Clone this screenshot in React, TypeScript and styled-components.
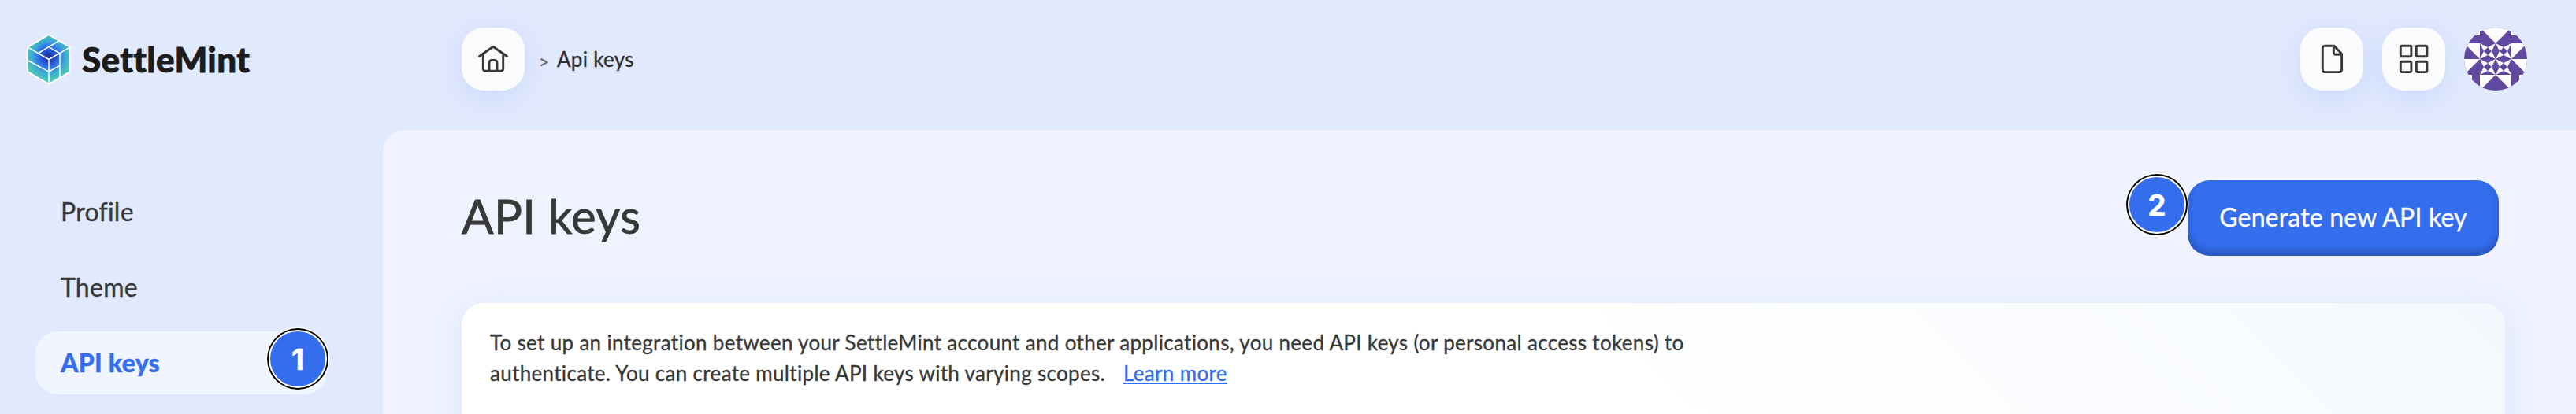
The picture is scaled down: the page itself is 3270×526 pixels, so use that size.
import React from "react";
import styled, { createGlobalStyle } from "styled-components";

const color = {
  shell: "#e1e9fd",
  main: "#f0f3ff",
  surface: "#fbfbfe",
  ink: "#373838",
  blue: "#346eed",
  active: "#f0f5ff",
  avatar: "#6149a0",
};

const GlobalStyle = createGlobalStyle`
  *, *::before, *::after { box-sizing: border-box; }
  body {
    margin: 0;
    overflow: hidden;
    background: ${color.shell};
    color: ${color.ink};
    font-family: Lato, "Open Sans", sans-serif;
    font-variant-ligatures: none;
    -webkit-text-stroke: 0.35px currentColor;
  }
`;

const Shell = styled.div`
  display: grid;
  grid-template-columns: 486px 1fr;
  grid-template-rows: 165px 361px;
  width: 100%;
  height: 526px;
  overflow: hidden;
`;

const Brand = styled.div`
  display: flex;
  align-items: center;
  gap: 14px;
  height: 150px;
  padding-left: 34px;
`;

const Wordmark = styled.span`
  color: #1c1c1c;
  font-size: 44px;
  font-weight: 900;
  line-height: 52px;
  letter-spacing: 0.4px;
  -webkit-text-stroke: 0.8px #1c1c1c;
`;

const TopBar = styled.header`
  display: flex;
  align-items: center;
  justify-content: space-between;
  height: 150px;
  padding: 0 62px 0 100px;
`;

const Breadcrumb = styled.nav`
  display: flex;
  align-items: center;
  font-size: 26px;
`;

const Separator = styled.span`
  width: 13px;
  margin: 6px 10px 0 18px;
  color: #66686f;
  font-size: 23px;
  line-height: 24px;
`;

const Crumb = styled.span`
  color: #2c2e33;
  letter-spacing: 0.3px;
`;

const Actions = styled.div`
  display: flex;
  gap: 24px;
`;

const IconButton = styled.button`
  display: block;
  width: 80px;
  height: 80px;
  padding: 0;
  border: 0;
  border-radius: 28px;
  background: ${color.surface};
  box-shadow: 0 8px 32px rgba(176, 198, 255, 0.45);
`;

const Glyph = styled.svg`
  display: block;
  width: 80px;
  height: 80px;
  fill: none;
  stroke: ${color.ink};
  stroke-width: 2.9;
  stroke-linecap: round;
  stroke-linejoin: round;
`;

const Avatar = styled.svg`
  display: block;
  width: 80px;
  height: 80px;
  border-radius: 50%;
`;

const Sidebar = styled.aside`
  display: flex;
  flex-direction: column;
  gap: 16px;
  padding: 64px 71px 0 45px;
`;

const NavItem = styled.a<{ $active?: boolean }>`
  position: relative;
  display: flex;
  flex-shrink: 0;
  align-items: center;
  height: 80px;
  padding: 0 32px 2px;
  border-radius: 28px;
  background: ${(p) => (p.$active ? color.active : "transparent")};
  color: ${(p) => (p.$active ? color.blue : color.ink)};
  font-size: 32px;
  font-weight: ${(p) => (p.$active ? 900 : 400)};
  letter-spacing: 0.25px;
`;

const Marker = styled.span<{ $left: number; $top: number }>`
  position: absolute;
  left: ${(p) => p.$left}px;
  top: ${(p) => p.$top}px;
  display: flex;
  align-items: center;
  justify-content: center;
  width: 74px;
  height: 74px;
  padding-top: 1px;
  border: 2px solid #fff;
  border-radius: 50%;
  background: ${color.blue};
  box-shadow: 0 0 0 2px #000, 0 0 0 3.5px #fff;
  color: #fff;
  font: 700 37px/44px Inter, sans-serif;
  letter-spacing: 0;
`;

const Main = styled.main`
  padding: 64px 90px 0 100px;
  border-top-left-radius: 28px;
  background: ${color.main};
`;

const PageHead = styled.div`
  display: flex;
  align-items: center;
  justify-content: space-between;
  height: 96px;
  padding-right: 8px;
`;

const Title = styled.h1`
  margin: 0;
  padding-bottom: 6px;
  font-size: 60px;
  font-weight: 400;
  line-height: 72px;
  letter-spacing: 0.3px;
  -webkit-text-stroke-width: 0.8px;
`;

const PrimaryButton = styled.button`
  position: relative;
  width: 395px;
  height: 96px;
  padding: 0 0 2px;
  border: 0;
  border-radius: 28px;
  background: ${color.blue};
  box-shadow: inset 0 -6px 8px rgba(20, 40, 110, 0.4);
  color: #fff;
  font: 400 32px/40px Lato, sans-serif;
  letter-spacing: 0.18px;
  -webkit-text-stroke: 0.35px #fff;
`;

const Card = styled.section`
  height: 400px;
  margin-top: 60px;
  padding: 31px 36px;
  border-radius: 28px;
  background: linear-gradient(45deg, #fff 60%, #f4f8fe 100%);
  box-shadow: 0 8px 40px rgba(205, 222, 252, 0.75);
`;

const Intro = styled.div`
  font-size: 26px;
  line-height: 39px;
  letter-spacing: 0.32px;
  white-space: nowrap;
`;

const IntroLine = styled.div`
  display: flex;
  gap: 23px;
`;

const TextLink = styled.a`
  color: ${color.blue};
  text-decoration: underline;
  text-decoration-thickness: 2px;
  text-underline-offset: 2px;
  text-decoration-skip-ink: none;
`;

const LogoMark = () => (
  <svg width="56" height="65" viewBox="42 37 168 194">
    <defs>
      <radialGradient id="mint" gradientUnits="userSpaceOnUse" cx="126" cy="124" r="90">
        <stop offset="0.08" stopColor="#1d3a9b" />
        <stop offset="0.28" stopColor="#2352cf" />
        <stop offset="0.46" stopColor="#3176ee" />
        <stop offset="0.72" stopColor="#3cafd0" />
        <stop offset="1" stopColor="#52c8b4" />
      </radialGradient>
    </defs>
    <g fill="none" stroke="#fff" strokeWidth="4.5" strokeLinejoin="round">
      <path d="M126 40 207 87V181L126 228 45 181V87Z" fill="url(#mint)" strokeWidth="5.5" />
      <path d="M45 87 126 134 207 87M126 134V228M45 137 126 181 168 157M168 110V203M86 110 164 63M127 87 168 111" />
    </g>
  </svg>
);

const HomeGlyph = () => (
  <Glyph viewBox="0 0 80 80">
    <path d="M22.5 36.5 38.6 25.2a2.4 2.4 0 0 1 2.8 0L57.5 36.5M27.3 34.5V52.5a2.7 2.7 0 0 0 2.7 2.7H50a2.7 2.7 0 0 0 2.7-2.7V34.5M35 55V44.6a3.2 3.2 0 0 1 3.2-3.2h3.6a3.2 3.2 0 0 1 3.2 3.2V55" />
  </Glyph>
);

const FileGlyph = () => (
  <Glyph viewBox="0 0 80 80">
    <path d="M43 23.3H31.2a2.9 2.9 0 0 0-2.9 2.9V53.7a2.9 2.9 0 0 0 2.9 2.9H49.7a2.9 2.9 0 0 0 2.9-2.9V33.6ZM42.3 23.6V31.6a2.6 2.6 0 0 0 2.6 2.6H52.3" />
  </Glyph>
);

const GridGlyph = () => (
  <Glyph viewBox="0 0 80 80">
    {[23.3, 43.3].map((x) =>
      [23.3, 43.2].map((y) => <rect key={`${x}-${y}`} x={x} y={y} width="13.6" height="13.4" rx="1.8" />)
    )}
  </Glyph>
);

const starCells = [20, 40].flatMap((x) => [20, 40].map((y) => [x, y]));

const UserAvatar = () => (
  <Avatar viewBox="0 0 80 80">
    <rect width="80" height="80" fill={color.avatar} />
    <g fill="#fff">
      <path d="M20 0H60L40 20ZM0 20H20V40ZM60 20H80L60 40ZM0 40H20L0 60ZM60 40H80V60ZM20 60H40L20 80ZM40 60H60V80Z" />
      <path d="M20 10H10L20 5ZM60 10H70L60 5ZM10 60V70L5 60ZM70 60V70L75 60Z" />
      {starCells.map(([x, y]) => (
        <path
          key={`${x}-${y}`}
          transform={`translate(${x} ${y})`}
          d="M0 0 10 5 5 10ZM20 0 10 5 15 10ZM0 20 5 10 10 15ZM20 20 10 15 15 10Z"
        />
      ))}
    </g>
  </Avatar>
);

export default function App() {
  return (
    <>
      <GlobalStyle />
      <Shell>
        <Brand>
          <LogoMark />
          <Wordmark>SettleMint</Wordmark>
        </Brand>
        <TopBar>
          <Breadcrumb>
            <IconButton aria-label="Home">
              <HomeGlyph />
            </IconButton>
            <Separator>&gt;</Separator>
            <Crumb>Api keys</Crumb>
          </Breadcrumb>
          <Actions>
            <IconButton aria-label="Documents">
              <FileGlyph />
            </IconButton>
            <IconButton aria-label="Applications">
              <GridGlyph />
            </IconButton>
            <UserAvatar />
          </Actions>
        </TopBar>
        <Sidebar>
          <NavItem>Profile</NavItem>
          <NavItem>Theme</NavItem>
          <NavItem $active>
            API keys
            <Marker $left={296} $top={-2}>1</Marker>
          </NavItem>
        </Sidebar>
        <Main>
          <PageHead>
            <Title>API keys</Title>
            <PrimaryButton>
              Generate new API key
              <Marker $left={-76} $top={-6}>2</Marker>
            </PrimaryButton>
          </PageHead>
          <Card>
            <Intro>
              <IntroLine>
                To set up an integration between your SettleMint account and other applications, you need API keys (or
                personal access tokens) to
              </IntroLine>
              <IntroLine>
                <span>authenticate. You can create multiple API keys with varying scopes.</span>
                <TextLink>Learn more</TextLink>
              </IntroLine>
            </Intro>
          </Card>
        </Main>
      </Shell>
    </>
  );
}
